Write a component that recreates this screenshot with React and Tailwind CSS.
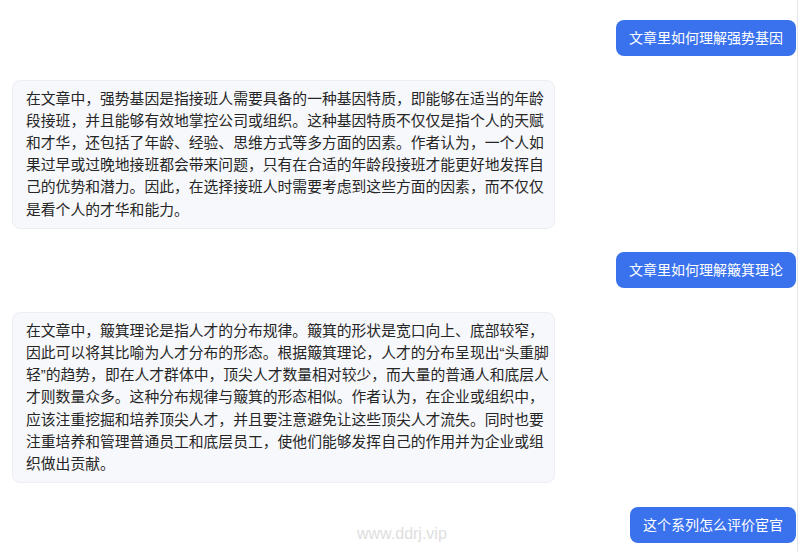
const messages = [
  { role: "user", text: "文章里如何理解强势基因" },
  {
    role: "assistant",
    text: "在文章中，强势基因是指接班人需要具备的一种基因特质，即能够在适当的年龄段接班，并且能够有效地掌控公司或组织。这种基因特质不仅仅是指个人的天赋和才华，还包括了年龄、经验、思维方式等多方面的因素。作者认为，一个人如果过早或过晚地接班都会带来问题，只有在合适的年龄段接班才能更好地发挥自己的优势和潜力。因此，在选择接班人时需要考虑到这些方面的因素，而不仅仅是看个人的才华和能力。",
  },
  { role: "user", text: "文章里如何理解簸箕理论" },
  {
    role: "assistant",
    text: "在文章中，簸箕理论是指人才的分布规律。簸箕的形状是宽口向上、底部较窄，因此可以将其比喻为人才分布的形态。根据簸箕理论，人才的分布呈现出\u201c头重脚轻\u201d的趋势，即在人才群体中，顶尖人才数量相对较少，而大量的普通人和底层人才则数量众多。这种分布规律与簸箕的形态相似。作者认为，在企业或组织中，应该注重挖掘和培养顶尖人才，并且要注意避免让这些顶尖人才流失。同时也要注重培养和管理普通员工和底层员工，使他们能够发挥自己的作用并为企业或组织做出贡献。",
  },
  { role: "user", text: "这个系列怎么评价宦官" },
];

const App = () => {
  return (
    <div
      className="relative w-[800px] h-[552px] overflow-hidden bg-white"
      style={{ fontFamily: '"Liberation Sans", "Noto Sans CJK SC", sans-serif' }}
    >
      <div className="flex flex-col gap-[23.5px] w-[798px] h-full pt-[20px] pl-[12px] pr-[1px] border-r border-[#e6e6e6]">
        {messages.map((m, i) =>
          m.role === "user" ? (
            <div
              key={i}
              className="self-end rounded-[8px] bg-[#3a72ee] text-white text-[14px] leading-[22px] px-[13px] py-[7px]"
            >
              {m.text}
            </div>
          ) : (
            <div
              key={i}
              className="self-start w-[543px] rounded-[8px] bg-[#f7f8fb] border border-[#eceef3] pl-[13px] pr-[3px] py-[7px] text-[14.8px] leading-[22.2px] text-[#262626]"
            >
              {m.text}
            </div>
          )
        )}
      </div>

      {/* watermark */}
      <div className="absolute left-[357px] top-[522px] text-[16px] text-[#dedede]">
        www.ddrj.vip
      </div>
    </div>
  );
};

export default App;
